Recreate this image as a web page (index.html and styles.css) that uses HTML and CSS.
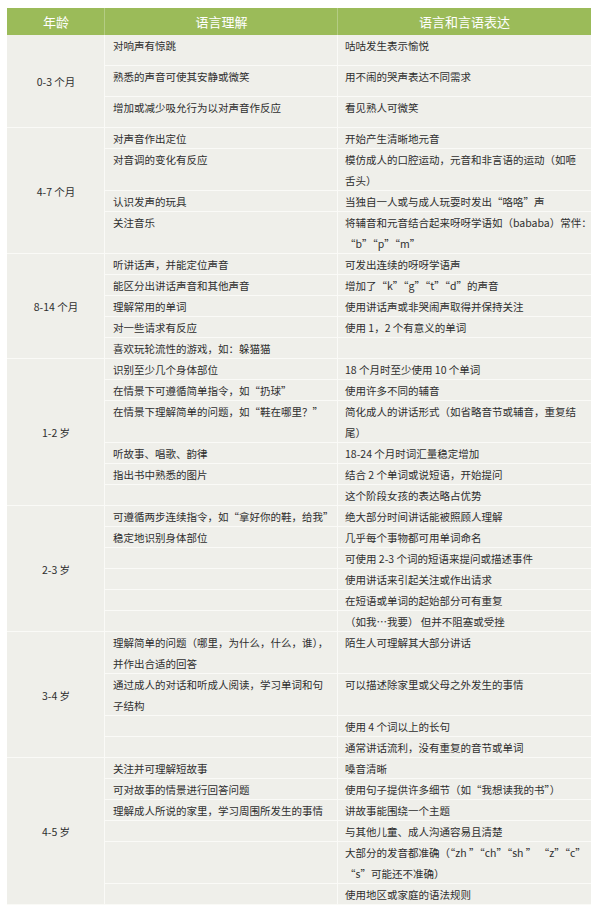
FILE: index.html
```html
<!DOCTYPE html>
<html lang="zh-CN">
<head>
<meta charset="utf-8">
<link rel="stylesheet" href="styles.css">
</head>
<body>
<table class="chart">
  <colgroup>
    <col class="c-age">
    <col class="c-und">
    <col class="c-exp">
  </colgroup>
  <thead>
    <tr><th>年龄</th><th>语言理解</th><th>语言和言语表达</th></tr>
  </thead>
  <tbody class="grp">
    <tr class="tall"><td class="age" rowspan="3">0-3 个月</td><td>对响声有惊跳</td><td>咕咕发生表示愉悦</td></tr>
    <tr class="tall"><td>熟悉的声音可使其安静或微笑</td><td>用不闹的哭声表达不同需求</td></tr>
    <tr class="tall"><td>增加或减少吸允行为以对声音作反应</td><td>看见熟人可微笑</td></tr>
  </tbody>
  <tbody class="grp">
    <tr><td class="age" rowspan="4">4-7 个月</td><td>对声音作出定位</td><td>开始产生清晰地元音</td></tr>
    <tr><td>对音调的变化有反应</td><td>模仿成人的口腔运动，元音和非言语的运动（如咂<br>舌头）</td></tr>
    <tr><td>认识发声的玩具</td><td>当独自一人或与成人玩耍时发出“咯咯”声</td></tr>
    <tr><td>关注音乐</td><td>将辅音和元音结合起来呀呀学语如（bababa）常伴：<br>“b”“p”“m”</td></tr>
  </tbody>
  <tbody class="grp">
    <tr><td class="age" rowspan="5">8-14 个月</td><td>听讲话声，并能定位声音</td><td>可发出连续的呀呀学语声</td></tr>
    <tr><td>能区分出讲话声音和其他声音</td><td>增加了“k”“g”“t”“d”的声音</td></tr>
    <tr><td>理解常用的单词</td><td>使用讲话声或非哭闹声取得并保持关注</td></tr>
    <tr><td>对一些请求有反应</td><td>使用 1，2 个有意义的单词</td></tr>
    <tr><td>喜欢玩轮流性的游戏，如：躲猫猫</td><td></td></tr>
  </tbody>
  <tbody class="grp">
    <tr><td class="age" rowspan="6">1-2 岁</td><td>识别至少几个身体部位</td><td>18 个月时至少使用 10 个单词</td></tr>
    <tr><td>在情景下可遵循简单指令，如“扔球”</td><td>使用许多不同的辅音</td></tr>
    <tr><td>在情景下理解简单的问题，如“鞋在哪里？”</td><td>简化成人的讲话形式（如省略音节或辅音，重复结<br>尾）</td></tr>
    <tr><td>听故事、唱歌、韵律</td><td>18-24 个月时词汇量稳定增加</td></tr>
    <tr><td>指出书中熟悉的图片</td><td>结合 2 个单词或说短语，开始提问</td></tr>
    <tr><td></td><td>这个阶段女孩的表达略占优势</td></tr>
  </tbody>
  <tbody class="grp">
    <tr><td class="age" rowspan="6">2-3 岁</td><td>可遵循两步连续指令，如“拿好你的鞋，给我”</td><td>绝大部分时间讲话能被照顾人理解</td></tr>
    <tr><td>稳定地识别身体部位</td><td>几乎每个事物都可用单词命名</td></tr>
    <tr><td></td><td>可使用 2-3 个词的短语来提问或描述事件</td></tr>
    <tr><td></td><td>使用讲话来引起关注或作出请求</td></tr>
    <tr><td></td><td>在短语或单词的起始部分可有重复</td></tr>
    <tr><td></td><td>（如我…我要） 但并不阻塞或受挫</td></tr>
  </tbody>
  <tbody class="grp">
    <tr><td class="age" rowspan="4">3-4 岁</td><td>理解简单的问题（哪里，为什么，什么，谁），<br>并作出合适的回答</td><td>陌生人可理解其大部分讲话</td></tr>
    <tr><td>通过成人的对话和听成人阅读，学习单词和句<br>子结构</td><td>可以描述除家里或父母之外发生的事情</td></tr>
    <tr><td></td><td>使用 4 个词以上的长句</td></tr>
    <tr><td></td><td>通常讲话流利，没有重复的音节或单词</td></tr>
  </tbody>
  <tbody class="grp">
    <tr><td class="age" rowspan="6">4-5 岁</td><td>关注并可理解短故事</td><td>嗓音清晰</td></tr>
    <tr><td>可对故事的情景进行回答问题</td><td>使用句子提供许多细节（如“我想读我的书”）</td></tr>
    <tr><td>理解成人所说的家里，学习周围所发生的事情</td><td>讲故事能围绕一个主题</td></tr>
    <tr><td></td><td>与其他儿童、成人沟通容易且清楚</td></tr>
    <tr><td></td><td>大部分的发音都准确（“zh ”“ch”“sh ” “z”“c”<br>“s”可能还不准确）</td></tr>
    <tr><td></td><td>使用地区或家庭的语法规则</td></tr>
  </tbody>
</table>
</body>
</html>
```

FILE: styles.css
```css
html, body {
  margin: 0;
  padding: 0;
  background: #ffffff;
}

body {
  padding: 8px 9px 0 7px;
  font-family: "Noto Sans CJK SC", "Noto Sans", sans-serif;
}

.chart {
  width: 584px;
  border-collapse: separate;
  border-spacing: 0;
  table-layout: fixed;
  background: #efefea;
  color: #2e2e2e;
  font-size: 10.5px;
}

.c-age { width: 98px; }
.c-und { width: 233px; }
.c-exp { width: 253px; }

.chart th {
  height: 27px;
  padding: 0;
  background: #9bbb59;
  color: #ffffff;
  font-size: 13px;
  font-weight: normal;
  text-align: center;
  vertical-align: middle;
  box-shadow: inset -1px 0 0 #b4cc84;
}

.chart th:last-child {
  box-shadow: none;
}

.chart td {
  padding: 0 8px;
  line-height: 21px;
  height: 21px;
  vertical-align: top;
  white-space: nowrap;
  overflow: visible;
  box-shadow: inset -1px -1px 0 #fafaf7;
}

.chart td:last-child {
  padding-left: 7px;
  box-shadow: inset 0 -1px 0 #fafaf7;
}

.chart tr.tall td {
  height: 31px;
}

.chart td.age {
  text-align: center;
  vertical-align: middle;
  padding: 0;
}
```
